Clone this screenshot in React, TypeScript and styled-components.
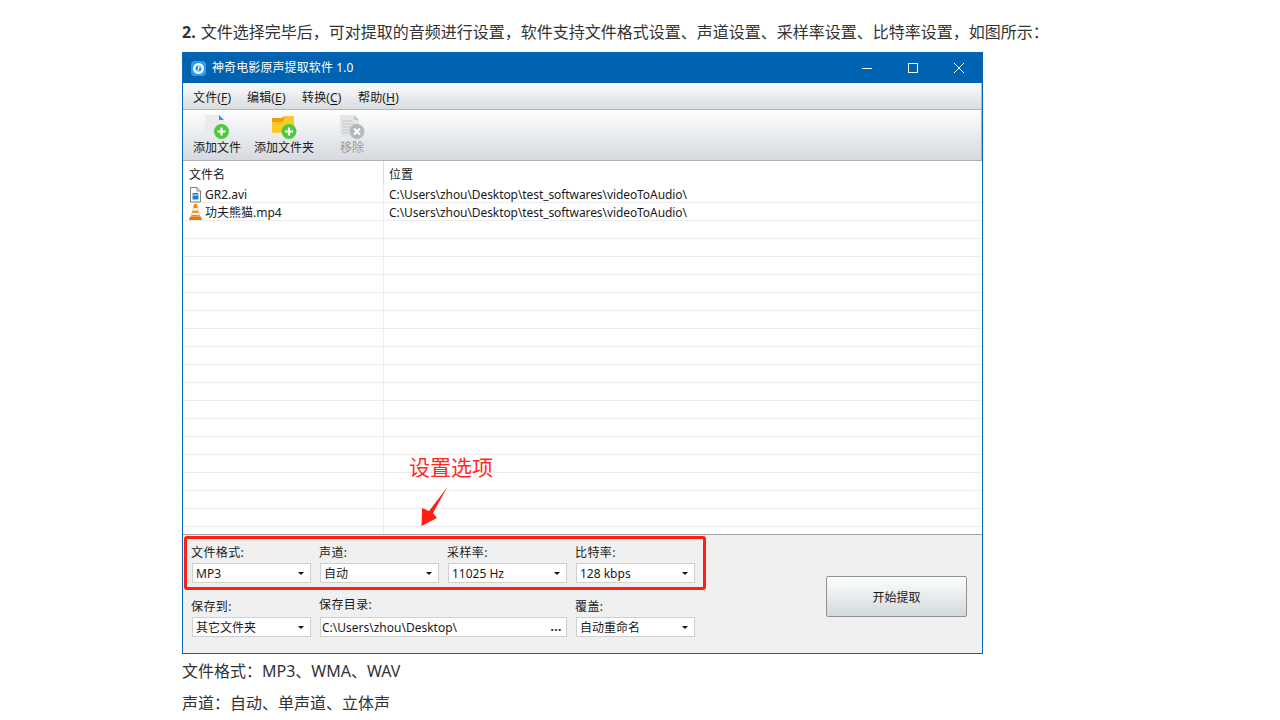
import React from 'react';
import styled, { createGlobalStyle } from 'styled-components';

const GlobalStyle = createGlobalStyle`
  html, body {
    margin: 0;
    padding: 0;
    background: #fff;
    overflow: hidden;
  }
  * {
    box-sizing: border-box;
  }
`;

const Article = styled.div`
  padding: 20px 0 0 182px;
  height: 720px;
  overflow: hidden;
  font-family: "Noto Sans", "Noto Sans CJK SC", sans-serif;
  color: #333;
`;

const Paragraph = styled.p<{ $top: number }>`
  margin: ${(p) => p.$top}px 0 0;
  font-size: 16px;
  line-height: 24px;
  white-space: nowrap;
  b {
    font-weight: 700;
    margin-right: 1px;
  }
`;

const AppWindow = styled.div`
  position: relative;
  width: 801px;
  height: 602px;
  margin-top: 8px;
  border: 1px solid #0a66b4;
  display: flex;
  flex-direction: column;
  font-family: "Noto Sans", "Noto Sans CJK SC", sans-serif;
  font-size: 12px;
  color: #1a1a1a;
`;

const TitleBar = styled.div`
  height: 30px;
  flex: none;
  background: #0063b1;
  color: #fff;
  display: flex;
  align-items: center;
  padding-left: 8px;
`;

const TitleText = styled.span`
  flex: 1;
  margin-left: 6px;
  line-height: 28px;
  letter-spacing: 0.1px;
`;

const WindowButton = styled.div`
  width: 46px;
  height: 30px;
  display: flex;
  align-items: center;
  justify-content: center;
`;

const MenuBar = styled.div`
  height: 27px;
  flex: none;
  display: flex;
  align-items: center;
  padding: 1px 0 0 10px;
  background: linear-gradient(#fbfcfc, #d9dde0);
  border-bottom: 1px solid #b4b6b8;
  border-right: 1px solid #b4b6b8;
`;

const MenuItem = styled.span<{ $width: number }>`
  width: ${(p) => p.$width}px;
  letter-spacing: 0.15px;
  u {
    text-underline-offset: 2px;
  }
`;

const ToolBar = styled.div`
  height: 51px;
  flex: none;
  display: flex;
  gap: 13px;
  padding-left: 10px;
  background: linear-gradient(#fdfefe, #d6dade);
  border-bottom: 1px solid #adb0b3;
  border-right: 1px solid #adb0b3;
`;

const ToolButton = styled.div<{ $disabled?: boolean; $gapBefore?: number }>`
  display: flex;
  flex-direction: column;
  align-items: center;
  padding-top: 5px;
  margin-left: ${(p) => p.$gapBefore ?? 0}px;
  color: ${(p) => (p.$disabled ? '#9a9a9a' : '#1a1a1a')};
  svg {
    display: block;
  }
`;

const ToolLabel = styled.span`
  line-height: 16px;
  margin-top: 1px;
  white-space: nowrap;
`;

const FileList = styled.div`
  flex: 1;
  min-height: 0;
  overflow: hidden;
  background: #fff;
`;

const HeaderRow = styled.div`
  height: 24px;
  display: grid;
  grid-template-columns: 201px 1fr;
  align-items: stretch;
`;

const HeaderCell = styled.div<{ $divider?: boolean }>`
  padding-left: ${(p) => (p.$divider ? 6 : 5)}px;
  line-height: 28px;
  border-right: ${(p) => (p.$divider ? '1px solid #dcdcdc' : 'none')};
`;

const Row = styled.div`
  height: 18px;
  display: grid;
  grid-template-columns: 201px 1fr;
  border-bottom: 1px solid #ededed;
`;

const NameCell = styled.div`
  display: flex;
  align-items: center;
  gap: 3px;
  padding-left: 6px;
  border-right: 1px solid #ededed;
  line-height: 19px;
  white-space: nowrap;
  svg {
    flex: none;
  }
`;

const PathCell = styled.div`
  padding-left: 5px;
  line-height: 19px;
  letter-spacing: -0.08px;
  white-space: nowrap;
`;

const BottomPanel = styled.div`
  height: 119px;
  flex: none;
  background: #f0f0f0;
  border-top: 1px solid #a3a3a3;
  display: flex;
  justify-content: space-between;
  padding: 10px 15px 0 9px;
`;

const FieldGrid = styled.div`
  display: grid;
  grid-template-columns: repeat(4, 119px);
  column-gap: 9px;
  row-gap: 16px;
  align-content: start;
`;

const Field = styled.div<{ $wide?: boolean }>`
  display: flex;
  flex-direction: column;
  gap: 4px;
  grid-column: ${(p) => (p.$wide ? 'span 2' : 'auto')};
`;

const FieldLabel = styled.div<{ $raised?: boolean }>`
  height: 14px;
  line-height: 16px;
  margin-left: -1px;
  margin-top: ${(p) => (p.$raised ? -2 : 0)}px;
  margin-bottom: ${(p) => (p.$raised ? 2 : 0)}px;
  letter-spacing: 0.4px;
`;

const SelectBox = styled.div<{ $input?: boolean }>`
  height: 20px;
  background: #fff;
  border: 1px solid #d0d0d0;
  display: flex;
  align-items: center;
  justify-content: space-between;
  padding: 0 6px 0 ${(p) => (p.$input ? 1 : 3)}px;
  line-height: 18px;
  white-space: nowrap;
`;

const SelectValue = styled.span`
  margin-top: 2px;
`;

const Caret = styled.span`
  width: 0;
  height: 0;
  border-left: 3px solid transparent;
  border-right: 3px solid transparent;
  border-top: 3px solid #111;
`;

const Dots = styled.span`
  font-weight: 700;
  letter-spacing: 0.5px;
  margin-right: -2px;
`;

const StartButton = styled.div`
  width: 141px;
  height: 41px;
  margin-top: 31px;
  border: 1px solid #929292;
  border-radius: 2px;
  background: linear-gradient(#fdfefe, #d3d9dc);
  display: flex;
  align-items: center;
  justify-content: center;
`;

const HighlightBox = styled.div`
  position: absolute;
  left: 1px;
  top: 483px;
  width: 522px;
  height: 54px;
  border: 3px solid #ff2015;
  border-radius: 3px;
`;

const Callout = styled.div`
  position: absolute;
  left: 226px;
  top: 400px;
  font-size: 21px;
  line-height: 28px;
  color: #ff2a1f;
  white-space: nowrap;
`;

const CalloutArrow = styled.svg`
  position: absolute;
  left: 235px;
  top: 432px;
`;

const AppIcon = () => (
  <svg width="15" height="15" viewBox="0 0 15 15">
    <rect x="0" y="0" width="15" height="15" rx="4" fill="#2f9bf0" />
    <circle cx="7.5" cy="7.5" r="5.5" fill="#f2f9ff" />
    <circle cx="7.5" cy="7.5" r="3" fill="#2f8fe4" />
    <path d="M6 9.5 Q7 10 7.6 9 V5.6 L9.6 6.2" fill="none" stroke="#fff" strokeWidth="1" />
  </svg>
);

const Badge = ({ cx, cy, gray }: { cx: number; cy: number; gray?: boolean }) => (
  <g>
    <circle cx={cx} cy={cy} r="7.5" fill={gray ? '#b5b8ba' : '#4fc83c'} />
    {gray ? (
      <path
        d={`M${cx - 3} ${cy - 3} L${cx + 3} ${cy + 3} M${cx + 3} ${cy - 3} L${cx - 3} ${cy + 3}`}
        stroke="#fff"
        strokeWidth="2"
      />
    ) : (
      <path d={`M${cx - 4} ${cy} H${cx + 4} M${cx} ${cy - 4} V${cy + 4}`} stroke="#fff" strokeWidth="2.2" />
    )}
  </g>
);

const AddFileIcon = () => (
  <svg width="26" height="24" viewBox="0 0 26 24">
    <path d="M1 0 H15 L20 5 V22 H1 Z" fill="#e9ebec" />
    <path d="M15 0 L20 5 H15 Z" fill="#3d8fd0" />
    <Badge cx={17.5} cy={16.5} />
  </svg>
);

const AddFolderIcon = () => (
  <svg width="26" height="24" viewBox="0 0 26 24">
    <path d="M1 4 Q1 3 2 3 H11 L13 1 H22 Q23 1 23 2 V18 H2 Q1 18 1 17 Z" fill="#f9cb2a" />
    <path d="M1 4 Q1 3 2 3 H11 L13 1 V5 L11 7 H1 Z" fill="#ee9c10" />
    <Badge cx={18} cy={16.5} />
  </svg>
);

const RemoveIcon = () => (
  <svg width="26" height="24" viewBox="0 0 26 24">
    <path d="M1 0 H15 L20 5 V22 H1 Z" fill="#e4e5e6" />
    <path d="M15 0 L20 5 H15 Z" fill="#c4c6c8" />
    <path d="M3 6 H13 M3 9 H16 M3 12 H16 M3 15 H10 M3 18 H10" stroke="#c2c4c6" strokeWidth="1" />
    <Badge cx={18} cy={16.5} gray />
  </svg>
);

const VideoFileIcon = () => (
  <svg width="13" height="17" viewBox="0 0 13 17">
    <path d="M1.5 1.5 H8 L11.5 5 V16 H1.5 Z" fill="#fff" stroke="#7a8288" />
    <path d="M8 1.5 V5 H11.5" fill="#e4e8ea" stroke="#7a8288" />
    <rect x="3.5" y="7" width="6" height="6.5" fill="#1f7fd6" />
    <path d="M3.5 9 H9.5" stroke="#fff" strokeWidth="0.8" />
  </svg>
);

const ConeIcon = () => (
  <svg width="13" height="17" viewBox="0 0 13 17">
    <path d="M5.1 0 H7.9 L11 12.5 H2 Z" fill="#f58a0b" />
    <path d="M4.4 4 H8.6 L9.3 6.8 H3.7 Z M3.1 8.8 H9.9 L10.4 11 H2.6 Z" fill="#f4f1ea" />
    <path d="M1 12.5 H12 L13 16 H0 Z" fill="#e8770a" />
  </svg>
);

const fileRows = [
  { name: 'GR2.avi', path: 'C:\\Users\\zhou\\Desktop\\test_softwares\\videoToAudio\\', icon: <VideoFileIcon /> },
  { name: '功夫熊猫.mp4', path: 'C:\\Users\\zhou\\Desktop\\test_softwares\\videoToAudio\\', icon: <ConeIcon /> },
];

const emptyRows = Array.from({ length: 18 }, (_, i) => i);

const menus = [
  { label: '文件', key: 'F', width: 54 },
  { label: '编辑', key: 'E', width: 55 },
  { label: '转换', key: 'C', width: 56 },
  { label: '帮助', key: 'H', width: 56 },
];

const Select = ({ label, value }: { label: string; value: string }) => (
  <Field>
    <FieldLabel>{label}</FieldLabel>
    <SelectBox>
      <SelectValue>{value}</SelectValue>
      <Caret />
    </SelectBox>
  </Field>
);

export default function App() {
  return (
    <>
      <GlobalStyle />
      <Article>
        <Paragraph $top={0}>
          <b>2.</b> 文件选择完毕后，可对提取的音频进行设置，软件支持文件格式设置、声道设置、采样率设置、比特率设置，如图所示：
        </Paragraph>
        <AppWindow>
          <TitleBar>
            <AppIcon />
            <TitleText>神奇电影原声提取软件 1.0</TitleText>
            <WindowButton>
              <svg width="10" height="10" viewBox="0 0 10 10">
                <path d="M0 5.5 H10" stroke="#fff" strokeWidth="1" />
              </svg>
            </WindowButton>
            <WindowButton>
              <svg width="10" height="10" viewBox="0 0 10 10">
                <rect x="0.5" y="0.5" width="9" height="9" fill="none" stroke="#fff" strokeWidth="1" />
              </svg>
            </WindowButton>
            <WindowButton>
              <svg width="10" height="10" viewBox="0 0 10 10">
                <path d="M0 0 L10 10 M10 0 L0 10" stroke="#fff" strokeWidth="1" />
              </svg>
            </WindowButton>
          </TitleBar>

          <MenuBar>
            {menus.map((m) => (
              <MenuItem key={m.key} $width={m.width}>
                {m.label}(<u>{m.key}</u>)
              </MenuItem>
            ))}
          </MenuBar>

          <ToolBar>
            <ToolButton>
              <AddFileIcon />
              <ToolLabel>添加文件</ToolLabel>
            </ToolButton>
            <ToolButton>
              <AddFolderIcon />
              <ToolLabel>添加文件夹</ToolLabel>
            </ToolButton>
            <ToolButton $disabled $gapBefore={12}>
              <RemoveIcon />
              <ToolLabel>移除</ToolLabel>
            </ToolButton>
          </ToolBar>

          <FileList>
            <HeaderRow>
              <HeaderCell $divider>文件名</HeaderCell>
              <HeaderCell>位置</HeaderCell>
            </HeaderRow>
            {fileRows.map((row) => (
              <Row key={row.name}>
                <NameCell>
                  {row.icon}
                  {row.name}
                </NameCell>
                <PathCell>{row.path}</PathCell>
              </Row>
            ))}
            {emptyRows.map((i) => (
              <Row key={i}>
                <NameCell />
                <PathCell />
              </Row>
            ))}
          </FileList>

          <BottomPanel>
            <FieldGrid>
              <Select label="文件格式:" value="MP3" />
              <Select label="声道:" value="自动" />
              <Select label="采样率:" value="11025 Hz" />
              <Select label="比特率:" value="128 kbps" />
              <Select label="保存到:" value="其它文件夹" />
              <Field $wide>
                <FieldLabel $raised>保存目录:</FieldLabel>
                <SelectBox $input>
                  <SelectValue>C:\Users\zhou\Desktop\</SelectValue>
                  <Dots>...</Dots>
                </SelectBox>
              </Field>
              <Select label="覆盖:" value="自动重命名" />
            </FieldGrid>
            <StartButton>开始提取</StartButton>
          </BottomPanel>

          <HighlightBox />
          <Callout>设置选项</Callout>
          <CalloutArrow width="30" height="44" viewBox="0 0 30 44">
            <path d="M29.5 2 L15 28 L19 33 L3.5 41 L4 23 L11 26 L29.5 2 Z" fill="#ff2015" />
          </CalloutArrow>
        </AppWindow>
        <Paragraph $top={5}>文件格式：MP3、WMA、WAV</Paragraph>
        <Paragraph $top={8}>声道：自动、单声道、立体声</Paragraph>
      </Article>
    </>
  );
}
